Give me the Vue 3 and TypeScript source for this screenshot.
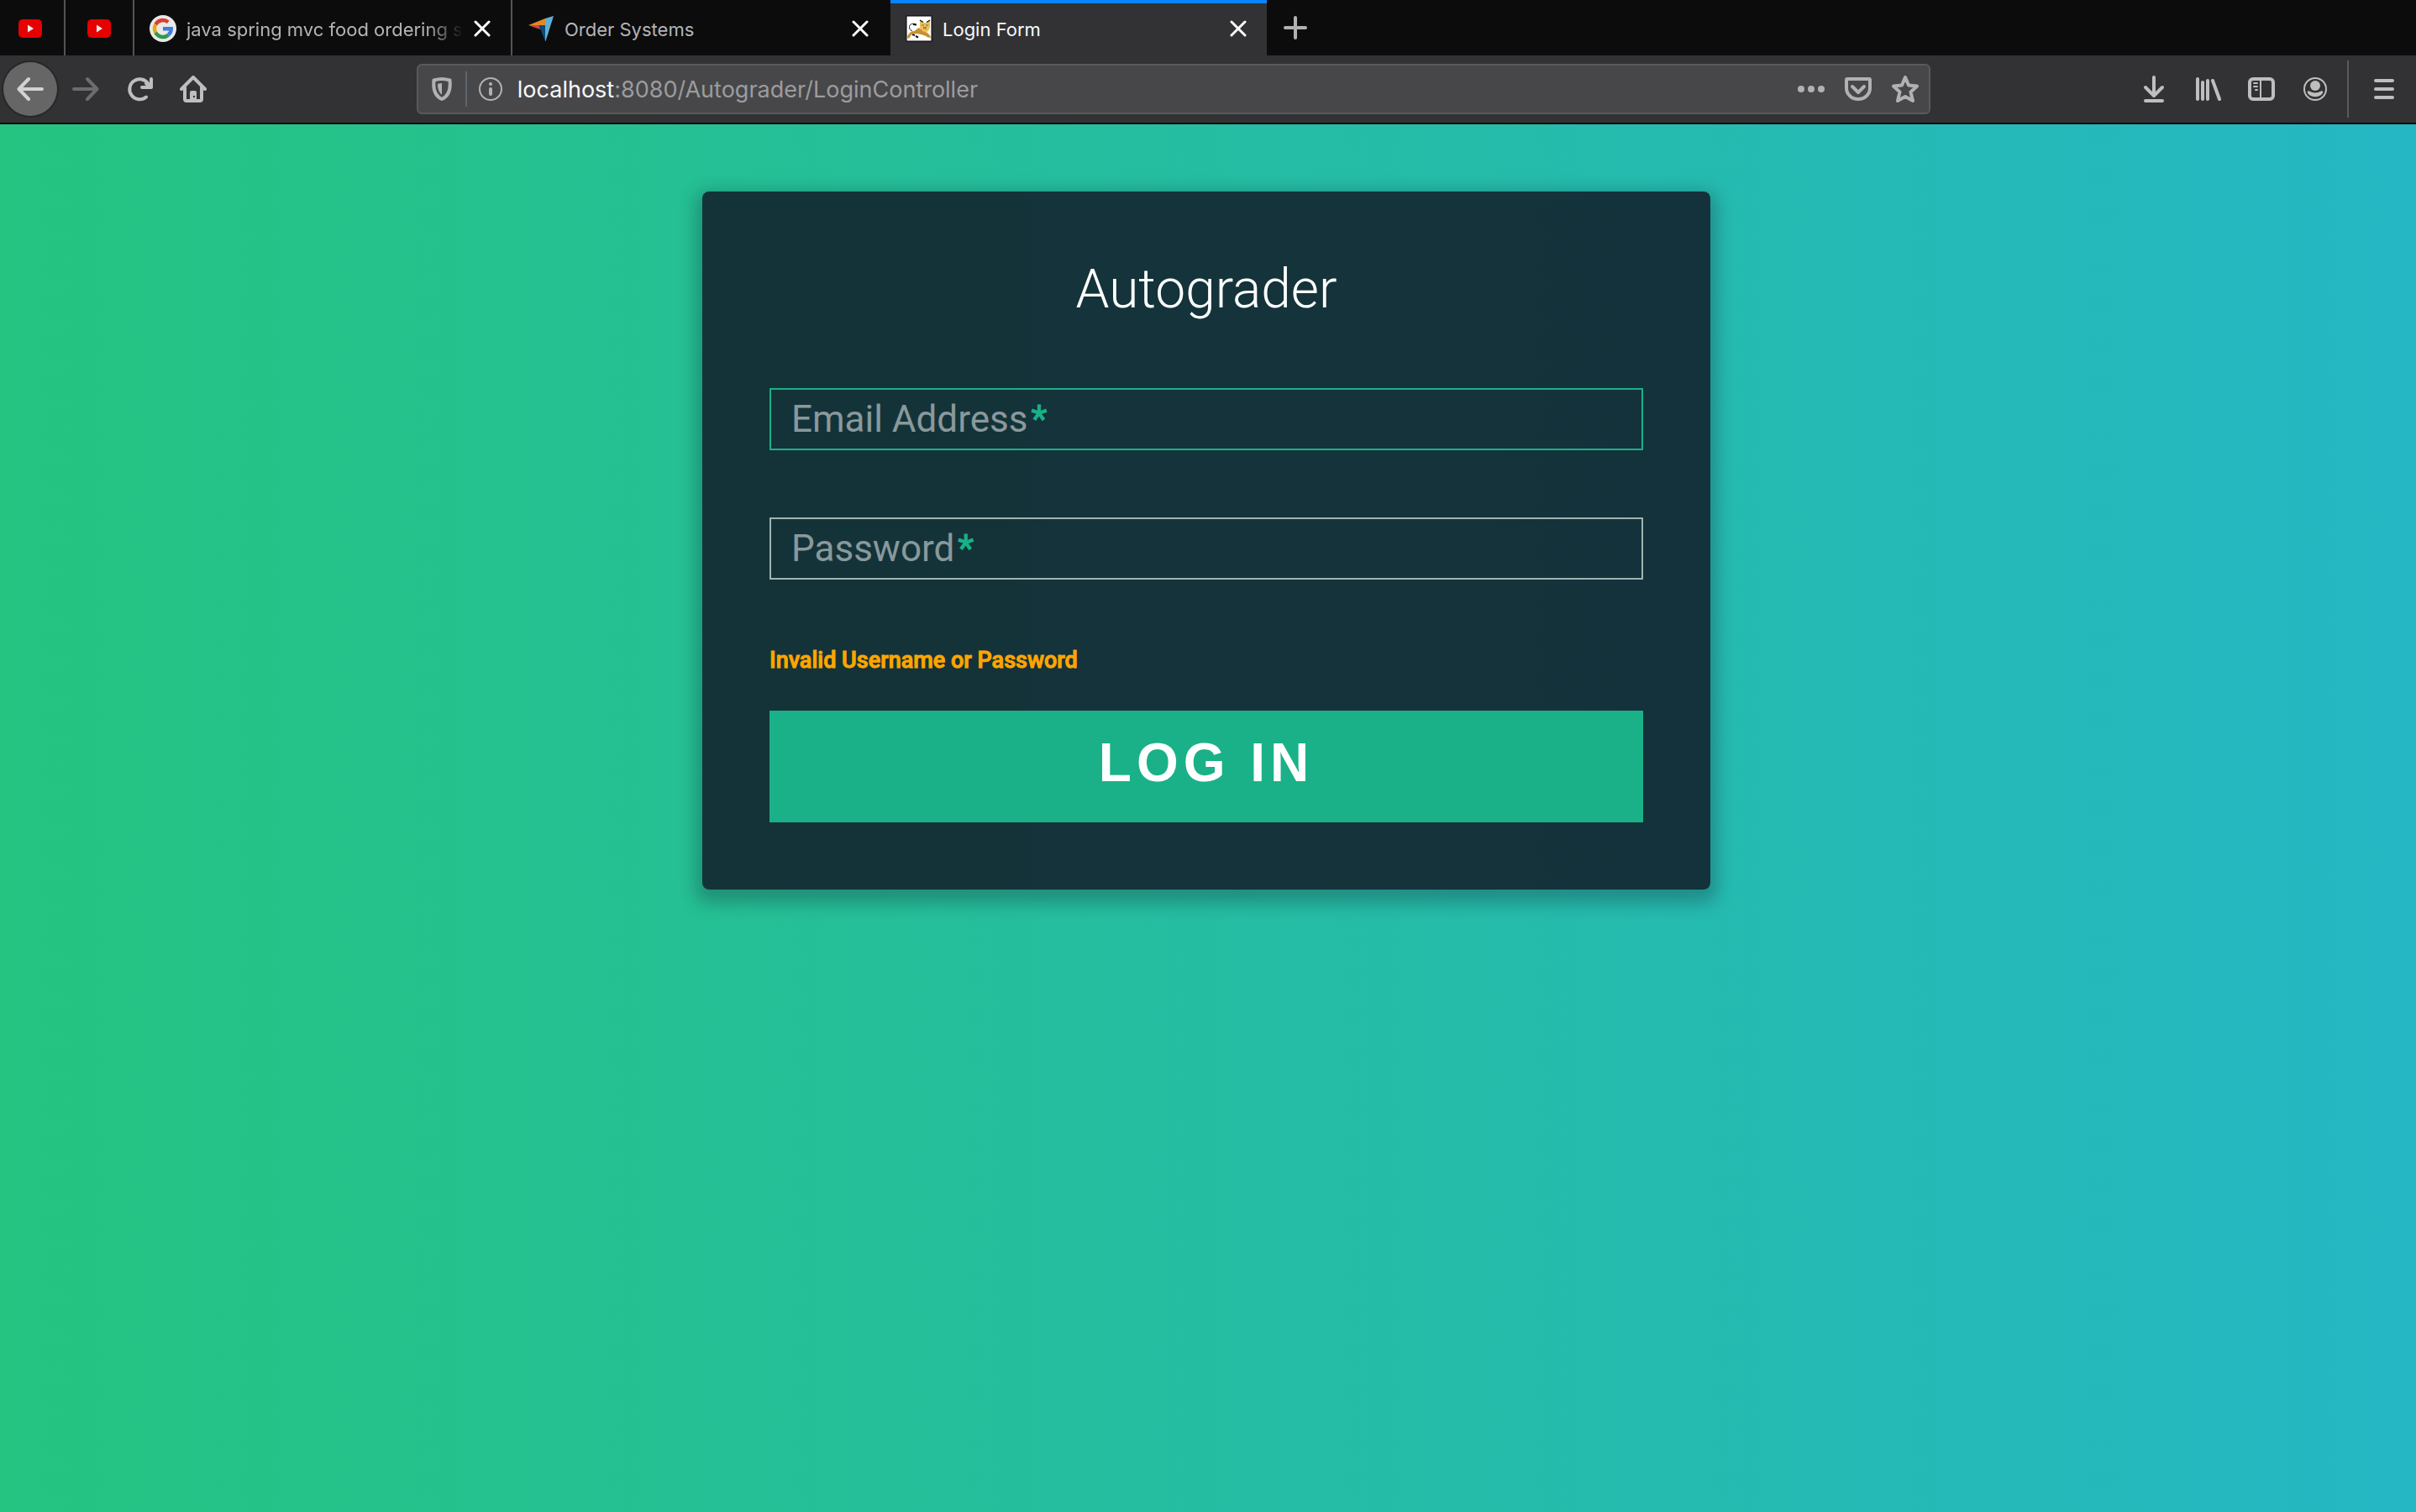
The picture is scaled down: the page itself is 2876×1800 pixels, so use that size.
<script setup lang="ts">
import { ref } from 'vue'

const email = ref('')
const password = ref('')
const error = ref('Invalid Username or Password')
</script>

<template>
  <div class="browser">
    <header class="chrome">
      <nav class="tabs" aria-label="Tabs">
        <button v-for="n in 2" :key="n" class="tab pinned" type="button" aria-label="YouTube">
          <svg width="28" height="22" viewBox="0 0 28 22">
            <rect width="28" height="22" rx="5" fill="#e60000" />
            <path d="M11 6.5v9l7-4.500z" fill="#e8e8e8" />
          </svg>
        </button>
        <div class="tab">
          <svg class="favicon" viewBox="0 0 32 32">
            <circle cx="16" cy="16" r="16" fill="#e9e9e9" />
            <g fill="none" stroke-width="4.400">
              <path d="M22.200 8.200A10 10 0 0 0 7.200 11.300" stroke="#d93f33" />
              <path d="M7.200 11.300A10 10 0 0 0 7.200 20.700" stroke="#e8a90a" />
              <path d="M7.200 20.700A10 10 0 0 0 22.400 23.700" stroke="#2f9a4a" />
              <path d="M22.400 23.700A10 10 0 0 0 25.800 16.200H16" stroke="#3f7de0" />
            </g>
          </svg>
          <a class="tab-title fade" href="#">java spring mvc food ordering system</a>
          <button class="close" type="button" aria-label="Close tab">
            <svg width="20" height="20" viewBox="0 0 20 20"><path d="M2 2l16 16M18 2L2 18" /></svg>
          </button>
        </div>
        <div class="tab last">
          <svg class="favicon" viewBox="0 0 32 32">
            <path d="M1 12L21 4V12z" fill="#e08a24" />
            <path d="M1 12H14L15 17z" fill="#d24444" />
            <path d="M13.500 12H21V31z" fill="#0b4a7a" />
            <path d="M21 4L31 1L21.500 31H21z" fill="#5fb0d8" />
          </svg>
          <a class="tab-title" href="#">Order Systems</a>
          <button class="close" type="button" aria-label="Close tab">
            <svg width="20" height="20" viewBox="0 0 20 20"><path d="M2 2l16 16M18 2L2 18" /></svg>
          </button>
        </div>
        <div class="tab active">
          <svg class="favicon" viewBox="0 0 32 32">
            <rect x="1" y="1" width="30" height="30" fill="#fff" stroke="#000" />
            <path d="M13 11.500C10 9 4 10 4.500 15c.5 3 2 3 3.500 4" fill="none" stroke="#222" stroke-width="1" />
            <path d="M9 11l4 .5" stroke="#111" stroke-width="1.800" />
            <path d="M8 23l3 1M12 25l3 1.500" stroke="#111" stroke-width="2" fill="none" />
            <path d="M1.500 27.500c1-5 4-8 9-8.500l5-4 6 3.500c4 2 7 4 9 8.500l-4-.5c-4-3-8-3.500-13-4.500-4 0-7 0-9 5.500z" fill="#c9902f" />
            <path d="M17 6l4 3h4l4-3v9l-2 4-3 1.500-4-1.500-3-4z" fill="#ecc05a" />
            <path d="M17 6l4 2.500M29 6l-4 2.500" stroke="#111" stroke-width="1.400" />
            <path d="M19 12h3M27 12h-3M21 16l4-2M21 14l4 3" stroke="#6a5220" stroke-width=".8" />
          </svg>
          <a class="tab-title" href="#">Login Form</a>
          <button class="close" type="button" aria-label="Close tab">
            <svg width="20" height="20" viewBox="0 0 20 20"><path d="M2 2l16 16M18 2L2 18" /></svg>
          </button>
        </div>
        <button class="new-tab" type="button" aria-label="New tab">
          <svg width="28" height="28" viewBox="0 0 28 28"><path d="M14 2v24M2 14h24" /></svg>
        </button>
      </nav>

      <div class="toolbar">
        <button class="tool back" type="button" aria-label="Back">
          <svg class="icon" viewBox="0 0 32 32"><path d="M30 16H2.500M14 4L2.500 16 14 28" /></svg>
        </button>
        <button class="tool forward" type="button" aria-label="Forward">
          <svg class="icon" viewBox="0 0 32 32"><path d="M2 16h27.500M18 4l11.500 12L18 28" /></svg>
        </button>
        <button class="tool" type="button" aria-label="Reload">
          <svg class="icon" viewBox="0 0 32 32">
            <path d="M24 25.500A12 12 0 1 1 26.500 10" />
            <path d="M30 4v10H19" />
            <path d="M24 9.500l5 4" />
          </svg>
        </button>
        <button class="tool" type="button" aria-label="Home">
          <svg class="icon" viewBox="0 0 32 32">
            <path d="M2 16L16 2l14 14" />
            <path d="M6 14v14q0 2 2 2h16q2 0 2-2V14" />
            <path d="M12 30V20q0-2 2-2h4q2 0 2 2v10z" fill="#bebebf" stroke="none" />
            <path d="M16 24h2v2h-2z" fill="#323234" stroke="none" />
          </svg>
        </button>
        <div class="spacer"></div>
        <div class="urlbar">
          <button class="site shield" type="button" aria-label="Tracking protection">
            <svg width="24" height="28" viewBox="0 0 24 28">
              <path d="M12 2c3 0 6 .5 9.500 1.500C22.500 13 21 22 12 26 3 22 1.500 13 2.500 3.500 6 2.500 9 2 12 2z" />
              <path d="M12 7l-5 .8c0 6 1.500 10.500 5 13z" fill="#b1b1b3" stroke="none" />
            </svg>
          </button>
          <button class="site info" type="button" aria-label="Site information">
            <svg width="28" height="28" viewBox="0 0 28 28">
              <circle cx="14" cy="14" r="13" stroke-width="2" />
              <circle cx="14" cy="8" r="2" fill="#b1b1b3" stroke="none" />
              <path d="M14 14v6" />
            </svg>
          </button>
          <a class="url" href="#"><span class="host">localhost</span>:8080/Autograder/LoginController</a>
          <button class="action" type="button" aria-label="Page actions">
            <svg class="icon" viewBox="0 0 32 32">
              <g fill="#b1b1b3" stroke="none">
                <circle cx="4" cy="16" r="4" />
                <circle cx="16" cy="16" r="4" />
                <circle cx="28" cy="16" r="4" />
              </g>
            </svg>
          </button>
          <button class="action" type="button" aria-label="Save to Pocket">
            <svg class="icon" viewBox="0 0 32 32">
              <path d="M3 4h26q1 0 1 1v10a14 13 0 0 1-28 0V5q0-1 1-1z" />
              <path d="M9 13l7 7 7-7" />
            </svg>
          </button>
          <button class="action" type="button" aria-label="Bookmark this page">
            <svg class="icon" viewBox="0 0 32 32">
              <path d="M16 2l4 9.500 10 1-7.500 7L25 30l-9-5-9 5 2.500-10.500L2 12.500l10-1z" />
            </svg>
          </button>
        </div>
        <div class="spacer"></div>
        <button class="tool" type="button" aria-label="Downloads">
          <svg class="icon" viewBox="0 0 32 32"><path d="M16 2v22M6 14l10 10 10-10M6 30h20" /></svg>
        </button>
        <button class="tool" type="button" aria-label="Library">
          <svg class="icon" viewBox="0 0 32 32"><path d="M4 4v24M10 8v20M16 6v22M22 6l8 22" /></svg>
        </button>
        <button class="tool" type="button" aria-label="Sidebars">
          <svg class="icon" viewBox="0 0 32 32">
            <rect x="2" y="4" width="28" height="24" rx="4" />
            <path d="M15 4v24M7 9h4M7 13h4M9 17h2" stroke-width="2" />
          </svg>
        </button>
        <button class="tool" type="button" aria-label="Account">
          <svg class="icon" viewBox="0 0 32 32">
            <circle cx="16" cy="16" r="13" stroke-width="2" />
            <circle cx="16" cy="12" r="6" fill="#bebebf" stroke="none" />
            <path d="M9 18.500q7 4 14 0c2-1 3 1 1.500 3-4 5-13 5-17 0-1.500-2-.5-4 1.500-3z" fill="#bebebf" stroke="none" />
          </svg>
        </button>
        <div class="divider"></div>
        <button class="tool" type="button" aria-label="Menu">
          <svg class="icon" viewBox="0 0 32 32"><path d="M6 6h20M6 16h20M6 26h20" /></svg>
        </button>
      </div>
    </header>

    <main class="page">
      <form class="card" @submit.prevent>
        <h1>Autograder</h1>
        <div class="field focused">
          <input id="email" v-model="email" type="email" required />
          <label for="email">Email Address<span class="req">*</span></label>
        </div>
        <div class="field">
          <input id="password" v-model="password" type="password" required />
          <label for="password">Password<span class="req">*</span></label>
        </div>
        <p class="error" role="alert">{{ error }}</p>
        <button class="submit" type="submit">Log In</button>
      </form>
    </main>
  </div>
</template>

<style>
body {
  margin: 0;
}
</style>

<style scoped>
.browser {
  display: flex;
  flex-direction: column;
  min-height: 100vh;
  font-family: Inter, "Liberation Sans", sans-serif;
}

button {
  display: flex;
  align-items: center;
  justify-content: center;
  padding: 0;
  border: 0;
  background: none;
  cursor: pointer;
}

svg {
  display: block;
  flex: none;
}

a {
  text-decoration: none;
}

.tabs {
  display: flex;
  height: 66px;
  padding-right: 4px;
  background: #0c0c0d;
  overflow: hidden;
}

.tab {
  display: flex;
  align-items: center;
  box-sizing: border-box;
  width: 450px;
  padding: 2px 24px 0 18px;
  border-right: 2px solid #545455;
  color: #b4b4b5;
}

.tab.pinned {
  width: 82px;
  padding: 2px 0 0;
}

.tab.pinned:first-child {
  margin-left: -4px;
}

.tab.last {
  border-color: #0c0c0d;
}

.tab.active {
  width: 448px;
  border: 0;
  background: #323234;
  box-shadow: inset 0 4px #0a84ff;
  color: #f9f9fa;
}

.favicon {
  width: 32px;
  height: 32px;
}

.tab-title {
  flex: 1;
  margin: 0 12px;
  padding-top: 2px;
  overflow: hidden;
  color: inherit;
  font-size: 22px;
  line-height: 32px;
  white-space: nowrap;
}

.tab-title.fade {
  mask-image: linear-gradient(to left, transparent, #000 44px);
}

.close path {
  fill: none;
  stroke: #fff;
  stroke-width: 3;
  stroke-linecap: round;
}

.new-tab {
  width: 68px;
}

.new-tab path {
  stroke: #b1b1b3;
  stroke-width: 4;
  stroke-linecap: round;
}

.toolbar {
  display: flex;
  align-items: center;
  box-sizing: border-box;
  height: 82px;
  padding: 0 6px 0 4px;
  border-bottom: 2px solid #0c0c0d;
  background: #323234;
}

.icon {
  width: 32px;
  height: 32px;
}

.tool,
.site,
.action {
  flex: none;
}

.tool svg,
.site svg,
.action svg {
  fill: none;
  stroke: #bebebf;
  stroke-width: 4;
  stroke-linecap: round;
  stroke-linejoin: round;
}

.tool {
  width: 64px;
  height: 64px;
}

.back {
  margin-right: 2px;
  border-radius: 50%;
  background: #666667;
  box-shadow: 0 0 0 2px #272728;
}

.tool.back svg {
  stroke: #d2d2d2;
}

.tool.forward svg {
  stroke: #6c6c6e;
}

.spacer {
  flex: 13;
}

.urlbar {
  display: flex;
  flex: 100;
  align-items: center;
  box-sizing: border-box;
  height: 60px;
  border: 2px solid #5a5a5c;
  border-radius: 6px;
  background: #474749;
}

.site svg,
.action svg {
  stroke: #b1b1b3;
}

.shield {
  width: 58px;
  height: 42px;
  border-right: 2px solid #5f656c;
}

.info {
  width: 56px;
}

.url {
  flex: 1;
  margin-left: 4px;
  padding-top: 2px;
  color: #9c9c9e;
  font-size: 27px;
  line-height: 36px;
}

.host {
  color: #f9f9fa;
}

.action {
  width: 56px;
}

.divider {
  width: 2px;
  height: 68px;
  margin: 0 10px 0 6px;
  background: #5a5a5c;
}

.page {
  flex: 1;
  padding: 80px 84px 80px 80px;
  background: linear-gradient(to right, #25c481, #25b7c4);
  font-family: Roboto, "Liberation Sans", sans-serif;
}

.card {
  box-sizing: border-box;
  max-width: 1200px;
  margin: 0 auto;
  padding: 80px;
  border-radius: 8px;
  background: rgba(19, 35, 47, 0.9);
  box-shadow: 0 8px 20px 8px rgba(19, 35, 47, 0.3);
}

h1 {
  margin: 0 0 80px;
  color: #fff;
  font-size: 64px;
  font-weight: 300;
  line-height: 74px;
  text-align: center;
}

.field {
  position: relative;
  margin-bottom: 80px;
}

.field input {
  display: block;
  box-sizing: border-box;
  width: 100%;
  height: 74px;
  padding: 10px 20px;
  border: 2px solid #a0b3b0;
  border-radius: 0;
  outline: 0;
  background: none;
  color: #fff;
  font: inherit;
  font-size: 44px;
}

.field.focused input {
  border-color: #1ab188;
}

/* The label lies over the empty input like a placeholder. */
.field label {
  position: absolute;
  inset: 0;
  display: flex;
  align-items: center;
  padding-left: 26px;
  color: rgba(255, 255, 255, 0.5);
  font-size: 44px;
  pointer-events: none;
}

.req {
  margin-left: 4px;
  color: #1ab188;
  -webkit-text-stroke: 1px #1ab188;
}

.error {
  margin: 0 0 44px;
  color: #ffa500;
  font-size: 27px;
  font-weight: 500;
  line-height: 32px;
  -webkit-text-stroke: 1px #ffa500;
}

.submit {
  width: 100%;
  padding: 25px 0 33px;
  background: #1ab188;
  color: #fff;
  font-family: "Liberation Sans", sans-serif;
  font-size: 64px;
  font-weight: 700;
  line-height: 75px;
  letter-spacing: 6px;
  text-transform: uppercase;
}
</style>
